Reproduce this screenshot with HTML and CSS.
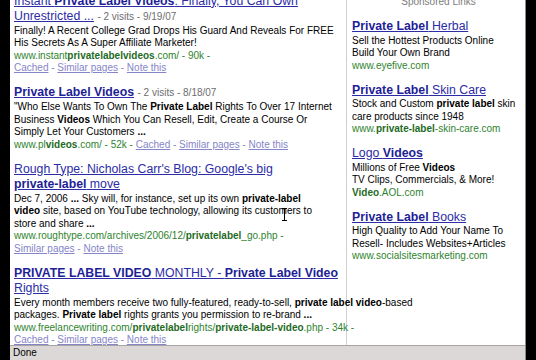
FILE: index.html
```html
<!DOCTYPE html>
<html lang="en">
<head>
    <meta charset="UTF-8">
    <meta name="viewport" content="width=device-width, initial-scale=1.0">
    <title>private label video - Google Search</title>
    <link rel="stylesheet" href="styles.css">
</head>
<body>
    <div class="window">
        <div class="page">
            <div class="results">
                <div class="result">
                    <a class="title" href="#">Instant <b>Private Label Videos</b>: Finally, You Can Own<br>Unrestricted ...</a> <span class="meta">- 2 visits - 9/19/07</span>
                    <div class="snippet">
                        Finally! A Recent College Grad Drops His Guard And Reveals For FREE<br>
                        His Secrets As A Super Affiliate Marketer!<br>
                        <span class="url">www.instant<b>privatelabelvideos</b>.com/ - 90k -</span><br>
                        <span class="links"><a href="#">Cached</a> - <a href="#">Similar pages</a> - <a href="#">Note this</a></span>
                    </div>
                </div>

                <div class="result">
                    <a class="title" href="#"><b>Private Label Videos</b></a> <span class="meta">- 2 visits - 8/18/07</span>
                    <div class="snippet">
                        "Who Else Wants To Own The <b>Private Label</b> Rights To Over 17 Internet<br>
                        Business <b>Videos</b> Which You Can Resell, Edit, Create a Course Or<br>
                        Simply Let Your Customers <b>...</b><br>
                        <span class="url">www.pl<b>videos</b>.com/ - 52k - </span><span class="links"><a href="#">Cached</a> - <a href="#">Similar pages</a> - <a href="#">Note this</a></span>
                    </div>
                </div>

                <div class="result">
                    <a class="title" href="#">Rough Type: Nicholas Carr's Blog: Google's big<br><b>private-label</b> move</a>
                    <div class="snippet">
                        Dec 7, 2006 <b>...</b> Sky will, for instance, set up its own <b>private-label</b><br>
                        <b>video</b> site, based on YouTube technology, allowing its customers to<br>
                        store and share <b>...</b><br>
                        <span class="url">www.roughtype.com/archives/2006/12/<b>privatelabel</b>_go.php -</span><br>
                        <span class="links"><a href="#">Similar pages</a> - <a href="#">Note this</a></span>
                    </div>
                    <span class="cursor"></span>
                </div>

                <div class="result">
                    <a class="title" href="#"><b>PRIVATE LABEL VIDEO</b> MONTHLY - <b>Private Label Video</b><br>Rights</a>
                    <div class="snippet">
                        Every month members receive two fully-featured, ready-to-sell, <b>private label video</b>-based<br>
                        packages. <b>Private label</b> rights grants you permission to re-brand <b>...</b><br>
                        <span class="url">www.freelancewriting.com/<b>privatelabel</b>rights/<b>private-label-video</b>.php - 34k -</span><br>
                        <span class="links"><a href="#">Cached</a> - <a href="#">Similar pages</a> - <a href="#">Note this</a></span>
                    </div>
                </div>
            </div>

            <div class="ads">
                <div class="ads-head">Sponsored Links</div>

                <div class="ad">
                    <a class="title" href="#"><b>Private Label</b> Herbal</a>
                    <div class="snippet">
                        Sell the Hottest Products Online<br>
                        Build Your Own Brand<br>
                        <span class="url">www.eyefive.com</span>
                    </div>
                </div>

                <div class="ad">
                    <a class="title" href="#"><b>Private Label</b> Skin Care</a>
                    <div class="snippet">
                        Stock and Custom <b>private label</b> skin<br>
                        care products since 1948<br>
                        <span class="url">www.<b>private-label</b>-skin-care.com</span>
                    </div>
                </div>

                <div class="ad">
                    <a class="title" href="#">Logo <b>Videos</b></a>
                    <div class="snippet">
                        Millions of Free <b>Videos</b><br>
                        TV Clips, Commercials, &amp; More!<br>
                        <span class="url"><b>Video</b>.AOL.com</span>
                    </div>
                </div>

                <div class="ad">
                    <a class="title" href="#"><b>Private Label</b> Books</a>
                    <div class="snippet">
                        High Quality to Add Your Name To<br>
                        Resell- Includes Websites+Articles<br>
                        <span class="url">www.socialsitesmarketing.com</span>
                    </div>
                </div>
            </div>
        </div>
        <div class="statusbar">Done</div>
    </div>
</body>
</html>
```

FILE: styles.css
```css
body {
    margin: 0;
    background-color: #000;
    font-family: "Liberation Sans", Arial, sans-serif;
    color: #000;
}
.window {
    margin-left: 10px;
    width: 515px;
    height: 360px;
    border-right: 1px solid #8c8c8c;
    background-color: #fff;
    display: flex;
    flex-direction: column;
}
.page {
    height: 345px;
    flex: none;
    overflow: hidden;
    display: flex;
    padding-left: 4px;
}
.results {
    width: 332px;
    margin-top: -6.5px;
    white-space: nowrap;
}
.result,
.ad {
    position: relative;
    font-size: 12.3px;
    line-height: 15px;
    margin-bottom: 10.5px;
}
.title {
    color: #2c2ca6;
    text-decoration: underline;
}
.title b {
    color: #1e1e96;
}
.meta {
    font-size: 10px;
    color: #6e6e6e;
}
.snippet {
    font-size: 10px;
    line-height: 12.5px;
    margin-top: 1px;
}
.ad .snippet {
    margin-top: 0.5px;
}
.url {
    color: #2e832e;
}
.url b {
    color: #1f6b1f;
}
.links {
    color: #8585c8;
}
.links a {
    color: #8585c8;
}
.cursor {
    position: absolute;
    left: 268px;
    top: 46px;
    width: 5px;
    height: 13px;
    background: linear-gradient(#000, #000) center / 1px 100% no-repeat,
        linear-gradient(#000, #000) top / 5px 1px no-repeat,
        linear-gradient(#000, #000) bottom / 5px 1px no-repeat;
}
.ads {
    flex: 1;
    border-left: 1px solid #d0d0d0;
    padding-left: 5px;
    white-space: nowrap;
}
.ads-head {
    margin-top: -4px;
    margin-bottom: 11px;
    font-size: 10px;
    line-height: 12px;
    color: #7c7c7c;
    text-align: center;
}
.statusbar {
    height: 15px;
    flex: none;
    border-top: 1px solid #a8a4a4;
    background-color: #dcd8d8;
    font-size: 10px;
    line-height: 14px;
    padding-left: 3px;
    box-sizing: border-box;
}
```
